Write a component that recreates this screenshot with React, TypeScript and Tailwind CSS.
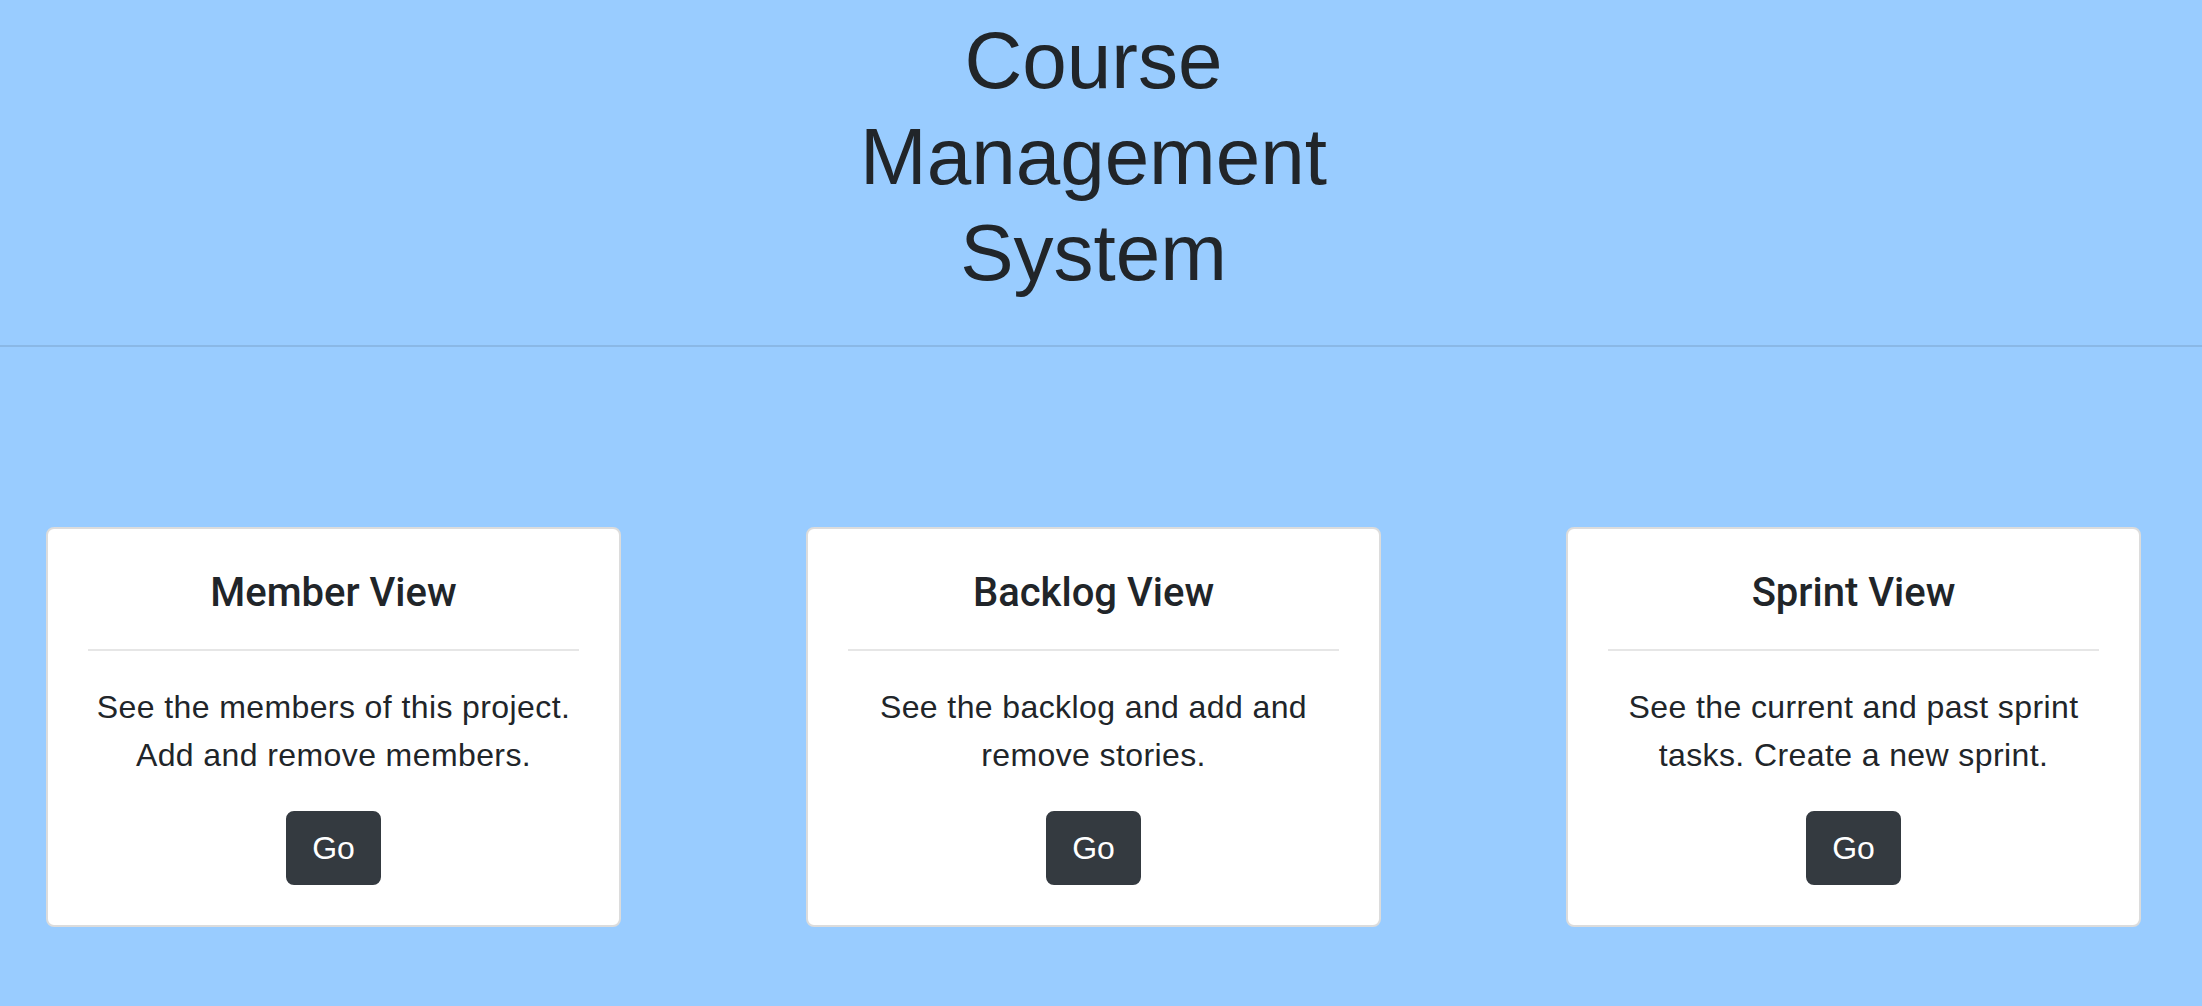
import React from 'react';

interface ViewCard {
  title: string;
  lines: string[];
}

const cards: ViewCard[] = [
  { title: 'Member View', lines: ['See the members of this project.', 'Add and remove members.'] },
  { title: 'Backlog View', lines: ['See the backlog and add and', 'remove stories.'] },
  { title: 'Sprint View', lines: ['See the current and past sprint', 'tasks. Create a new sprint.'] },
];

function Card({ title, lines }: ViewCard) {
  return (
    <div className="w-[575px] h-[400px] bg-white border-2 border-[#dcdcdc] rounded-[8px] p-[40px] flex flex-col items-center text-center">
      <h5 className="w-full text-[40px] leading-[48px] font-medium text-[#212529] font-['Roboto','Liberation_Sans',sans-serif]">
        {title}
      </h5>
      <div className="w-full h-[2px] bg-[#e6e6e6] my-[32px]" />
      <p className="w-full text-[32px] leading-[48px] tracking-[0.4px] text-[#212529] mb-[32px]">
        {lines.map((line) => (
          <span key={line} className="block whitespace-nowrap">
            {line}
          </span>
        ))}
      </p>
      <button className="h-[76px] px-[24px] bg-[#343a40] border-2 border-[#343a40] rounded-[8px] text-white text-[32px] leading-[48px]">
        Go
      </button>
    </div>
  );
}

export default function App() {
  return (
    <div className="min-h-screen bg-[#99ccff] font-['Liberation_Sans',Arial,sans-serif] text-[#212529]">
      {/* Header */}
      <div className="pr-[15px] pt-[13px]">
        <h1 className="text-center text-[80px] leading-[96px] font-normal">
          <span className="block">Course</span>
          <span className="block">Management</span>
          <span className="block">System</span>
        </h1>
      </div>
      <div className="mt-[44px] h-[2px] bg-[#8ab8e6]" />

      {/* Views */}
      <div className="pr-[15px]">
        <div className="flex justify-between px-[46px] pt-[180px]">
          {cards.map((c) => (
            <Card key={c.title} title={c.title} lines={c.lines} />
          ))}
        </div>
      </div>
    </div>
  );
}
